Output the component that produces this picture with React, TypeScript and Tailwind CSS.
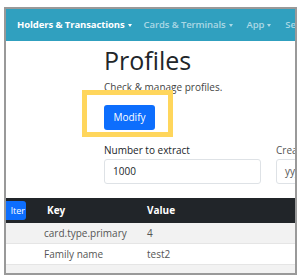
import React from "react";

const rows = [
  { key: "card.type.primary", value: "4" },
  { key: "Family name", value: "test2" },
  { key: "", value: "" },
];

function Caret() {
  return <span className="ml-[3px] inline-block align-middle border-x-[2.5px] border-t-[3px] border-x-transparent border-t-current" />;
}

export default function App() {
  return (
    <div className="w-[300px] h-[279px] bg-white pl-[4px] pt-[7px] font-['Open_Sans',sans-serif] overflow-hidden">
      <div className="relative w-[293px] h-[268px] border-2 border-[#999] overflow-hidden flex flex-col bg-white">
        {/* Nav bar */}
        <nav className="h-[32px] shrink-0 bg-[#30a0bf] flex items-center pl-[11px] gap-[12px] whitespace-nowrap text-[9.5px] tracking-[-0.1px]">
          <span className="text-white font-bold">Holders &amp; Transactions<Caret /></span>
          <span className="text-white/60 font-semibold">Cards &amp; Terminals<Caret /></span>
          <span className="text-white/60 font-semibold ml-[2px]">App<Caret /></span>
          <span className="text-white/60 font-semibold ml-[2px]">Se</span>
        </nav>

        {/* Page header + form */}
        <div className="pl-[98px] flex flex-col">
          <h1 className="text-[25px] leading-[32px] mt-[3px] text-[#212529] font-normal">Profiles</h1>
          <p className="text-[10px] text-[#444] mt-[5px] leading-[12px]">Check &amp; manage profiles.</p>
          <button className="mt-[12px] w-[51px] h-[25px] rounded-[3px] bg-[#0d6efd] text-white text-[10px]">Modify</button>
          <div className="flex gap-[15px] mt-[13px]">
            <div className="flex flex-col">
              <label className="text-[10px] leading-[14px] text-[#212529]">Number to extract</label>
              <div className="mt-[2px] w-[157px] h-[25px] border border-[#dee2e6] rounded-[3px] flex items-center pl-[8px] text-[10px] text-[#212529]">1000</div>
            </div>
            <div className="flex flex-col">
              <label className="text-[10px] leading-[14px] text-[#555]">Crea</label>
              <div className="mt-[2px] w-[60px] h-[25px] border border-[#dee2e6] rounded-[3px] flex items-center pl-[8px] text-[10px] text-[#555]">yyyy</div>
            </div>
          </div>
        </div>

        {/* Table */}
        <div className="mt-[14px] flex flex-col text-[10px]">
          <div className="h-[25px] bg-[#212529] flex items-center text-white font-bold">
            <span className="w-[20px] h-[19px] bg-[#0d6efd] rounded-r-[3px] flex items-center justify-end pr-[1px] text-[9px] font-normal">lter</span>
            <span className="ml-[21px] w-[100px]">Key</span>
            <span>Value</span>
          </div>
          {rows.map((r, i) => (
            <div key={i} className={`h-[21px] flex items-center text-[#555] border-b border-[#e5e5e5] ${i % 2 === 0 ? "bg-[#f2f2f2]" : "bg-white"}`}>
              <span className="ml-[38px] w-[103px]">{r.key}</span>
              <span>{r.value}</span>
            </div>
          ))}
        </div>

        {/* Highlight annotation */}
        <div className="absolute left-[76px] top-[81px] w-[91px] h-[47px] border-[5px] border-[#ffd65c]" />
      </div>
    </div>
  );
}
